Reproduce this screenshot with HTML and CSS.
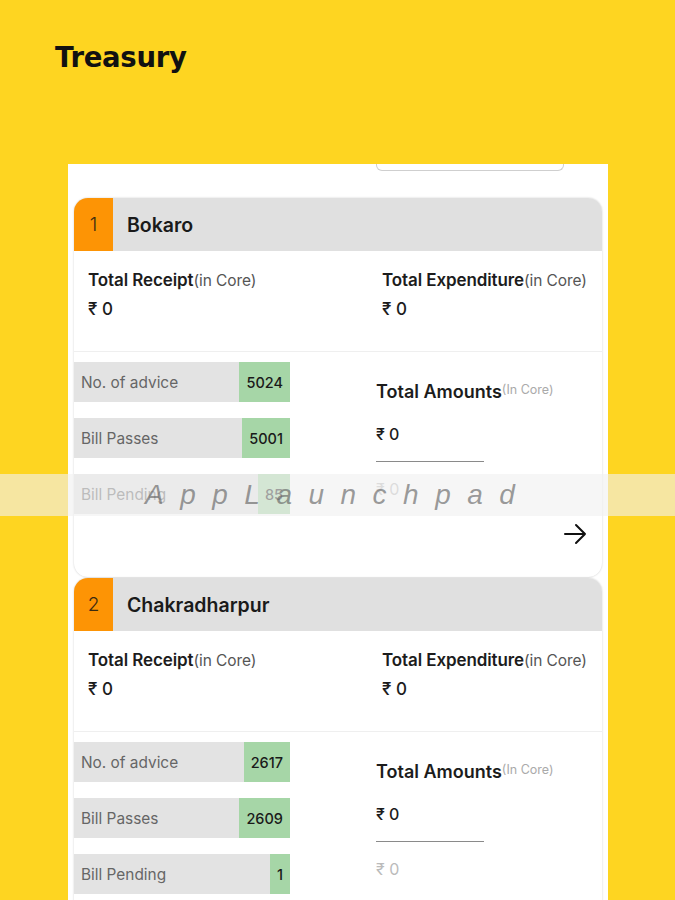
FILE: index.html
```html
<!DOCTYPE html>
<html>
<head>
<meta charset="utf-8">
<link rel="stylesheet" href="styles.css">
</head>
<body>
<div class="page">
  <h1 class="title">Treasury</h1>
  <div class="panel">
    <div class="search-stub"></div>

    <div class="card">
      <div class="card-head">
        <div class="num">1</div>
        <div class="name">Bokaro</div>
      </div>
      <div class="totals">
        <div class="tcol left">
          <div class="tlabel">Total Receipt<span class="unit">(in Core)</span></div>
          <div class="tval">₹ 0</div>
        </div>
        <div class="tcol">
          <div class="tlabel">Total Expenditure<span class="unit">(in Core)</span></div>
          <div class="tval">₹ 0</div>
        </div>
      </div>
      <div class="stats">
        <div class="bars">
          <div class="bar"><span class="blabel">No. of advice</span><span class="bval">5024</span></div>
          <div class="bar"><span class="blabel">Bill Passes</span><span class="bval">5001</span></div>
          <div class="bar"><span class="blabel">Bill Pending</span><span class="bval">85</span></div>
        </div>
        <div class="amounts">
          <div class="alabel">Total Amounts<span class="aunit">(In Core)</span></div>
          <div class="aval">₹ 0</div>
          <div class="aline"></div>
          <div class="aval faded">₹ 0</div>
        </div>
      </div>
      <div class="card-foot">
        <svg class="arrow" width="24" height="22" viewBox="0 0 24 22" fill="none" stroke="#111" stroke-width="2" stroke-linecap="round" stroke-linejoin="round"><path d="M2 11H22M13 2L22 11L13 20"/></svg>
      </div>
    </div>

    <div class="card">
      <div class="card-head">
        <div class="num">2</div>
        <div class="name">Chakradharpur</div>
      </div>
      <div class="totals">
        <div class="tcol left">
          <div class="tlabel">Total Receipt<span class="unit">(in Core)</span></div>
          <div class="tval">₹ 0</div>
        </div>
        <div class="tcol">
          <div class="tlabel">Total Expenditure<span class="unit">(in Core)</span></div>
          <div class="tval">₹ 0</div>
        </div>
      </div>
      <div class="stats">
        <div class="bars">
          <div class="bar"><span class="blabel">No. of advice</span><span class="bval">2617</span></div>
          <div class="bar"><span class="blabel">Bill Passes</span><span class="bval">2609</span></div>
          <div class="bar"><span class="blabel">Bill Pending</span><span class="bval">1</span></div>
        </div>
        <div class="amounts">
          <div class="alabel">Total Amounts<span class="aunit">(In Core)</span></div>
          <div class="aval">₹ 0</div>
          <div class="aline"></div>
          <div class="aval faded">₹ 0</div>
        </div>
      </div>
      <div class="card-foot">
        <svg class="arrow" width="24" height="22" viewBox="0 0 24 22" fill="none" stroke="#111" stroke-width="2" stroke-linecap="round" stroke-linejoin="round"><path d="M2 11H22M13 2L22 11L13 20"/></svg>
      </div>
    </div>
  </div>
  <div class="watermark"><span>AppLaunchpad</span></div>
</div>
</body>
</html>
```

FILE: styles.css
```css
html, body {
  margin: 0;
  padding: 0;
  height: 100%;
  overflow: hidden;
}
body {
  background: #fed521;
  font-family: Inter, "Noto Sans", sans-serif;
  color: #1c1c1c;
}
.page {
  position: relative;
  height: 900px;
  overflow: hidden;
}
.title {
  margin: 0;
  padding: 40px 0 0 55px;
  height: 164px;
  box-sizing: border-box;
  font-family: "DejaVu Sans", sans-serif;
  font-weight: bold;
  font-size: 27.5px;
  letter-spacing: -0.3px;
  line-height: 34px;
  color: #111;
}
.panel {
  margin: 0 67px 0 68px;
  background: #fff;
  height: 736px;
  padding: 0 6px;
  overflow: hidden;
}
.search-stub {
  margin-left: 302px;
  width: 186px;
  height: 6px;
  border: 1px solid #cfcfcf;
  border-top: none;
  border-radius: 0 0 6px 6px;
  margin-bottom: 27px;
}
.card {
  background: #fff;
  border-radius: 14px;
  box-shadow: 0 0 2px rgba(0, 0, 0, 0.22);
  overflow: hidden;
  margin-bottom: 1px;
}
.card-head {
  display: flex;
  height: 53px;
  background: #e0e0e0;
}
.num {
  width: 39px;
  background: #fd9405;
  display: flex;
  align-items: center;
  justify-content: center;
  font-size: 19px;
  font-weight: 300;
  color: #3a2a10;
}
.name {
  display: flex;
  align-items: center;
  padding-left: 14px;
  font-size: 19.5px;
  font-weight: 600;
  color: #1a1a1a;
}
.totals {
  display: flex;
  height: 101px;
  padding: 19px 0 0 14px;
  box-sizing: border-box;
  border-bottom: 1px solid #efefef;
}
.tcol.left {
  width: 294px;
}
.tlabel {
  font-size: 17px;
  font-weight: 600;
  line-height: 20px;
  letter-spacing: -0.1px;
  color: #1c1c1c;
  white-space: nowrap;
}
.unit {
  font-size: 15.5px;
  font-weight: 400;
  color: #555;
}
.tval {
  margin-top: 8px;
  font-size: 17px;
  line-height: 20px;
  font-weight: 500;
}
.stats {
  display: flex;
  padding-top: 10px;
}
.bars {
  width: 216px;
  display: flex;
  flex-direction: column;
  gap: 16px;
}
.bar {
  height: 40px;
  background: #e3e3e3;
  display: flex;
  justify-content: space-between;
}
.blabel {
  align-self: center;
  padding-left: 7px;
  font-size: 15.4px;
  color: #666;
}
.bval {
  background: #a6d6a7;
  padding: 0 7px;
  display: flex;
  align-items: center;
  font-size: 14.5px;
  font-weight: 500;
  color: #1a1a1a;
}
.amounts {
  margin-left: 86px;
  padding-top: 17px;
}
.alabel {
  font-size: 18px;
  font-weight: 600;
  line-height: 22px;
  color: #1c1c1c;
  white-space: nowrap;
}
.aunit {
  font-size: 12.5px;
  font-weight: 400;
  color: #aaa;
  vertical-align: 4px;
}
.aval {
  margin-top: 21px;
  font-size: 16px;
  line-height: 20px;
  font-weight: 500;
}
.aline {
  margin-top: 17px;
  width: 108px;
  height: 1px;
  background: #8a8a8a;
}
.aval.faded {
  margin-top: 17px;
  color: #bbb;
  font-weight: 400;
}
.card-foot {
  height: 63px;
  display: flex;
  justify-content: flex-end;
  padding: 9px 15px 0 0;
  box-sizing: border-box;
}
.watermark {
  position: absolute;
  left: 0;
  right: 0;
  top: 474px;
  height: 42px;
  background: rgba(240, 240, 240, 0.62);
  display: flex;
  align-items: center;
}
.watermark span {
  margin-left: 145px;
  font-family: "Liberation Sans", sans-serif;
  font-style: italic;
  font-size: 28px;
  letter-spacing: 16.5px;
  color: rgba(90, 90, 90, 0.6);
}
```
